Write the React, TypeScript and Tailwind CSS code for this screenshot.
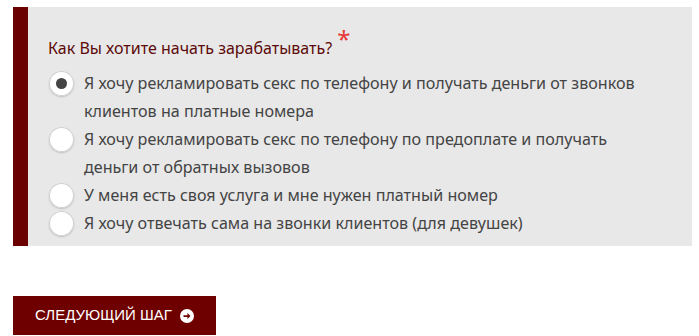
import { useState } from 'react'

const options = [
  'Я хочу рекламировать секс по телефону и получать деньги от звонков клиентов на платные номера',
  'Я хочу рекламировать секс по телефону по предоплате и получать деньги от обратных вызовов',
  'У меня есть своя услуга и мне нужен платный номер',
  'Я хочу отвечать сама на звонки клиентов (для девушек)',
]

export default function App() {
  const [selected, setSelected] = useState(0)

  return (
    <div className="min-h-screen bg-white pt-[7px] pl-[13px] pr-[7px]" style={{ fontFamily: '"Noto Sans", "Open Sans", sans-serif' }}>
      {/* блок вопроса */}
      <div className="border-l-[15px] border-[#6b0000] bg-[#e8e8e8] pl-[20px] pr-[46px] pt-[26px] pb-[9px]">
        <p className="text-[16px] leading-[26px] text-[#5c0a0a]">
          Как Вы хотите начать зарабатывать?
          <span className="relative -top-[6px] ml-[5px] text-[24px] leading-none text-[#e53935]">*</span>
        </p>
        <div className="mt-[8px]">
          {options.map((opt, i) => (
            <label key={i} className="flex items-start cursor-pointer" onClick={() => setSelected(i)}>
              <span className="mt-[2px] ml-[1px] mr-[10px] flex h-[25px] w-[25px] flex-shrink-0 items-center justify-center rounded-full bg-white shadow-[inset_0_0_0_1px_#cfcfcf,0_1px_2px_rgba(0,0,0,0.18)]">
                {selected === i && <span className="h-[11px] w-[11px] rounded-full bg-[#444]" />}
              </span>
              <span className="text-[16.1px] leading-[28px] text-[#444]">{opt}</span>
            </label>
          ))}
        </div>
      </div>

      <button className="mt-[50px] flex h-[39px] w-[203px] items-center gap-[8px] bg-[#6e0000] pl-[22px] text-[15px] uppercase text-white" style={{ fontFamily: '"Liberation Sans", Arial, sans-serif' }}>
        Следующий шаг
        <svg width="14" height="14" viewBox="0 0 16 16">
          <circle cx="8" cy="8" r="8" fill="white" />
          <path d="M4 7h4.5V4.5L12 8l-3.5 3.5V9H4z" fill="#6e0000" />
        </svg>
      </button>
    </div>
  )
}
